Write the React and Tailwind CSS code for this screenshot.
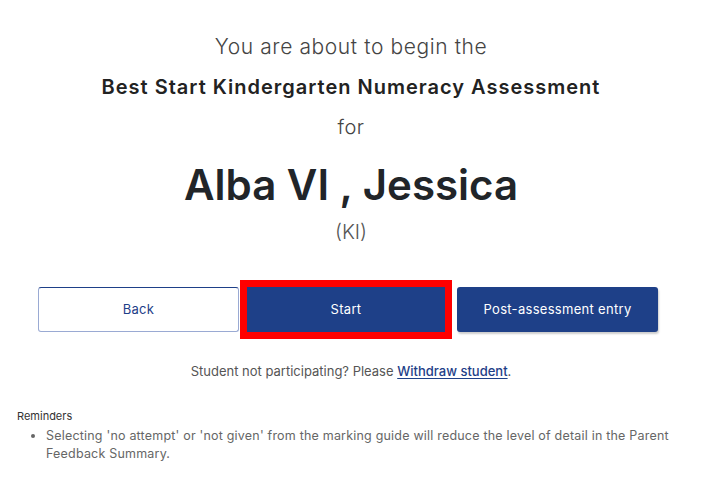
import React from "react";

export default function App() {
  return (
    <div className="w-[702px] h-[479px] bg-white text-[#212529] font-['Inter','Noto_Sans',sans-serif] overflow-hidden">
      {/* Heading block */}
      <div className="flex flex-col items-center pt-[33px]">
        <p className="text-[21px] font-light leading-[28px] tracking-[0.6px] text-[#444]">You are about to begin the</p>
        <p className="mt-[12px] text-[20px] font-semibold leading-[28px] tracking-[1px] text-[#222]">
          Best Start Kindergarten Numeracy Assessment
        </p>
        <p className="mt-[12px] text-[20px] font-light leading-[28px] tracking-[0.5px] text-[#444]">for</p>
        <h1 className="mt-[16px] text-[42px] font-semibold leading-[56px] text-[#212529]">Alba VI , Jessica</h1>
        <p className="mt-[5px] text-[20px] font-light leading-[28px] text-[#555]">(KI)</p>
      </div>

      {/* Actions */}
      <div className="flex mt-[41px] pl-[38px] h-[45px]">
        <button className="w-[201px] h-[45px] rounded-[3px] border border-[#9aaad3] border-t-[#1e4088] bg-white text-[13px] tracking-[0.3px] text-[#1e4088]">
          Back
        </button>
        <button className="ml-[8px] w-[198px] h-[45px] bg-[#1e4088] text-white text-[13px] tracking-[0.3px] outline-[7px] outline-solid outline-[#ff0000]">
          Start
        </button>
        <button className="ml-[12px] w-[201px] h-[45px] rounded-[3px] bg-[#1e4088] text-white text-[13px] tracking-[0.3px] shadow-[1px_2px_2px_rgba(0,0,0,0.2)]">
          Post-assessment entry
        </button>
      </div>

      <p className="mt-[29px] text-center text-[13px] text-[#555] leading-[20px]">
        Student not participating? Please{" "}
        <a href="#" className="text-[#1e4088] font-medium underline underline-offset-2">Withdraw student</a>.
      </p>

      {/* Reminders */}
      <div className="mt-[27px] px-[17px]">
        <p className="text-[11px] text-[#333] leading-[16px]">Reminders</p>
        <ul className="list-disc pl-[29px] text-[12.5px] tracking-[0.2px] text-[#666] leading-[18px] mt-[3px] pr-[8px]">
          <li>
            Selecting 'no attempt' or 'not given' from the marking guide will reduce the level of detail in the Parent
            Feedback Summary.
          </li>
        </ul>
      </div>
    </div>
  );
}
